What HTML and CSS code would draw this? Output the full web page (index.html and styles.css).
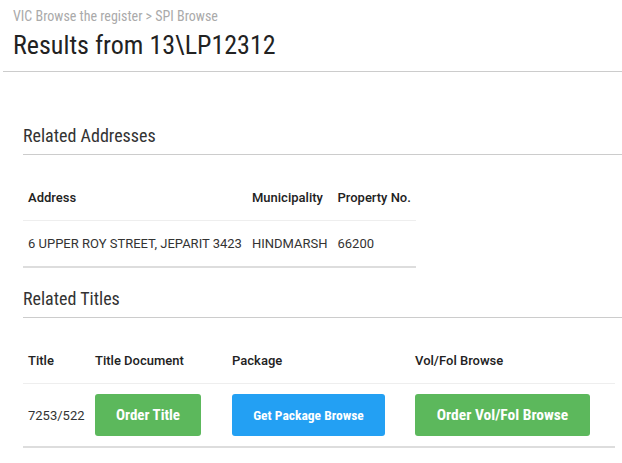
FILE: index.html
```html
<!DOCTYPE html>
<html>
<head>
<meta charset="utf-8">
<link rel="stylesheet" href="styles.css">
</head>
<body>
<header class="page-header">
  <div class="breadcrumb">VIC Browse the register &gt; SPI Browse</div>
  <h1 class="page-title">Results from 13\LP12312</h1>
</header>
<main class="content">
  <h2 class="section-title first">Related Addresses</h2>
  <table class="data-table addresses">
    <thead>
      <tr><th>Address</th><th>Municipality</th><th>Property No.</th></tr>
    </thead>
    <tbody>
      <tr><td>6 UPPER ROY STREET, JEPARIT 3423</td><td>HINDMARSH</td><td>66200</td></tr>
    </tbody>
  </table>
  <h2 class="section-title">Related Titles</h2>
  <table class="data-table titles">
    <thead>
      <tr><th class="c-title">Title</th><th class="c-doc">Title Document</th><th class="c-pkg">Package</th><th class="c-vol">Vol/Fol Browse</th></tr>
    </thead>
    <tbody>
      <tr>
        <td class="c-title">7253/522</td>
        <td class="c-doc"><span class="btn btn-green btn-order">Order Title</span></td>
        <td class="c-pkg"><span class="btn btn-blue btn-pkg">Get Package Browse</span></td>
        <td class="c-vol"><span class="btn btn-green btn-vol">Order Vol/Fol Browse</span></td>
      </tr>
    </tbody>
  </table>
</main>
</body>
</html>
```
FILE: styles.css
```css
html, body {
  margin: 0;
  padding: 0;
  background: #fff;
}
body {
  font-family: Roboto, "Liberation Sans", sans-serif;
  color: #333;
}
.page-header {
  margin-left: 3px;
  padding: 8px 0 11px 10px;
  border-bottom: 1px solid #ccc;
}
.breadcrumb {
  font-family: "Roboto Condensed", Roboto, sans-serif;
  font-size: 14px;
  line-height: 16px;
  color: #aaa;
}
.page-title {
  margin: 6px 0 0 0;
  font-family: "Roboto Condensed", Roboto, sans-serif;
  font-weight: 400;
  font-size: 26px;
  line-height: 30px;
  color: #222;
}
.content {
  padding-left: 23px;
}
.section-title {
  margin: 20px 0 0 0;
  padding-bottom: 7px;
  border-bottom: 1px solid #ccc;
  font-family: "Roboto Condensed", Roboto, sans-serif;
  font-weight: 400;
  font-size: 18px;
  line-height: 22px;
  color: #333;
}
.section-title.first {
  margin-top: 53px;
}
.data-table {
  margin-top: 20px;
  border-collapse: collapse;
  border-bottom: 2px solid #ddd;
  font-size: 13px;
  line-height: 17px;
}
.data-table th {
  text-align: left;
  font-family: "Roboto Medium", Roboto, sans-serif;
  font-weight: 500;
  padding: 14px 5px;
  border-bottom: 1px solid #eee;
  color: #222;
}
.data-table td {
  padding: 14px 5px;
  color: #333;
  vertical-align: middle;
}
.titles td {
  padding: 10px 5px;
}
.titles .c-title { width: 57px; }
.titles .c-doc { width: 127px; }
.titles .c-pkg { width: 173px; }
.titles .c-vol { width: 195px; }
.btn {
  display: flex;
  align-items: center;
  justify-content: center;
  height: 42px;
  border-radius: 3px;
  color: #fff;
  font-family: "Roboto Condensed", Roboto, sans-serif;
  font-weight: 700;
  font-size: 15px;
}
.btn-green { background: #5cb85c; }
.btn-blue { background: #23a0f3; font-size: 13.5px; }
.btn-order { width: 106px; }
.btn-pkg { width: 153px; }
.btn-vol { width: 175px; font-size: 15.5px; }
```
